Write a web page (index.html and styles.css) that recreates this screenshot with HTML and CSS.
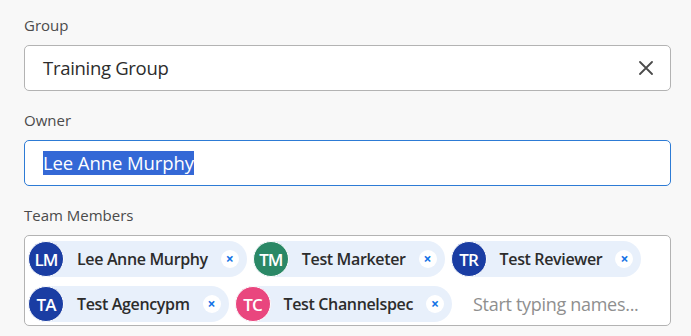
FILE: index.html
```html
<!DOCTYPE html>
<html lang="en">
<head>
    <meta charset="UTF-8">
    <title>Edit Group</title>
    <link rel="stylesheet" href="styles.css">
</head>
<body>

<div class="form">
    <div class="field">
        <label>Group</label>
        <div class="textbox">
            <span class="value">Training Group</span>
            <svg class="clear" width="14" height="14" viewBox="0 0 14 14">
                <path d="M1 1 L13 13 M13 1 L1 13" stroke="#4b4b4b" stroke-width="1.8" stroke-linecap="round"/>
            </svg>
        </div>
    </div>

    <div class="field">
        <label>Owner</label>
        <div class="textbox focused">
            <span class="value selected">Lee Anne Murphy</span>
        </div>
    </div>

    <div class="field">
        <label>Team Members</label>
        <div class="tagbox">
            <div class="tag">
                <span class="avatar blue">LM</span>
                <span class="name">Lee Anne Murphy</span>
                <span class="remove">&times;</span>
            </div>
            <div class="tag">
                <span class="avatar green">TM</span>
                <span class="name">Test Marketer</span>
                <span class="remove">&times;</span>
            </div>
            <div class="tag">
                <span class="avatar blue">TR</span>
                <span class="name">Test Reviewer</span>
                <span class="remove">&times;</span>
            </div>
            <div class="tag">
                <span class="avatar blue">TA</span>
                <span class="name">Test Agencypm</span>
                <span class="remove">&times;</span>
            </div>
            <div class="tag">
                <span class="avatar pink">TC</span>
                <span class="name">Test Channelspec</span>
                <span class="remove">&times;</span>
            </div>
            <span class="placeholder">Start typing names...</span>
        </div>
    </div>
</div>

</body>
</html>
```

FILE: styles.css
```css
body {
    font-family: 'Open Sans', 'Noto Sans', sans-serif;
    background-color: #f8f8f8;
    color: #2c2c2c;
    margin: 0;
    padding: 15px 20px 0 24px;
}

.field {
    margin-bottom: 19px;
}

label {
    display: block;
    font-size: 15px;
    line-height: 20px;
    color: #4b4b4b;
    margin-bottom: 10px;
}

.textbox {
    display: flex;
    align-items: center;
    justify-content: space-between;
    height: 46px;
    box-sizing: border-box;
    padding: 0 17px 0 18px;
    background-color: #fff;
    border: 1px solid #b3b3b3;
    border-radius: 5px;
}

.textbox.focused {
    border-color: #2d7bd5;
}

.value {
    font-size: 18.5px;
    font-weight: 500;
    line-height: 24px;
    letter-spacing: -0.3px;
}

.selected {
    background-color: #3468d6;
    color: #fff;
    letter-spacing: -0.1px;
}

.tagbox {
    display: flex;
    flex-wrap: wrap;
    align-items: center;
    column-gap: 6px;
    row-gap: 9px;
    padding: 5px 3px 3px 3px;
    background-color: #fff;
    border: 1px solid #b3b3b3;
    border-radius: 5px;
}

.tag {
    display: flex;
    align-items: center;
    height: 36px;
    padding-right: 8px;
    background-color: #e8f0fb;
    border-radius: 18px;
}

.avatar {
    display: flex;
    align-items: center;
    justify-content: center;
    width: 36px;
    height: 36px;
    box-sizing: border-box;
    border: 1.5px solid #fff;
    border-radius: 50%;
    color: #fff;
    font-size: 17px;
    font-weight: 600;
    letter-spacing: -1px;
}

.blue { background-color: #1a3da3; }
.green { background-color: #2a8866; }
.pink { background-color: #e9467e; }

.name {
    margin: 0 13px;
    font-size: 16px;
    font-weight: 600;
    letter-spacing: -0.35px;
}

.remove {
    display: flex;
    align-items: center;
    justify-content: center;
    width: 18px;
    height: 18px;
    border-radius: 50%;
    background-color: #fff;
    color: #1473e6;
    font-size: 14px;
    font-weight: 700;
    line-height: 1;
}

.placeholder {
    margin-left: 15px;
    font-size: 18px;
    color: #8f8f8f;
    letter-spacing: -0.3px;
}
```
